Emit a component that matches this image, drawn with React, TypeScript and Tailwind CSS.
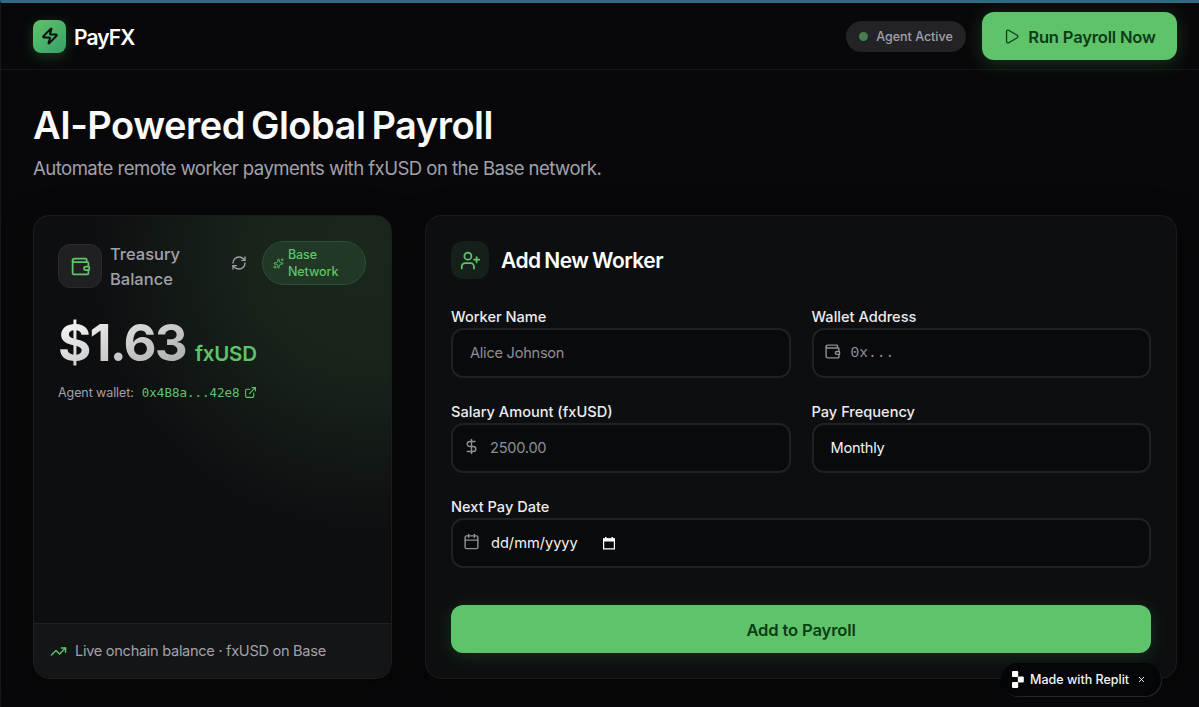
import type { ReactNode } from "react"
import { Calendar, DollarSign, ExternalLink, Play, RefreshCw, Sparkles, TrendingUp, UserPlus, Wallet, X, Zap } from "lucide-react"

function Header() {
  return (
    <header className="flex h-[67px] items-center justify-between border-b border-[#151617] pl-8 pr-[22px]">
      <div className="flex items-center gap-2">
        <div className="flex h-[33px] w-[33px] items-center justify-center rounded-lg bg-linear-to-br from-[#5fc36a] to-[#36a068] shadow-[0_4px_14px_rgba(70,190,90,0.25)]">
          <Zap className="h-[18px] w-[18px] text-[#08130b]" strokeWidth={2.7} />
        </div>
        <span className="pt-[3px] text-[21px] font-semibold tracking-[-0.9px] text-white">PayFX</span>
      </div>
      <div className="flex items-center gap-4">
        <div className="flex h-[31px] w-[120px] items-center justify-center gap-2 rounded-full bg-[#232327]">
          <span className="h-[9px] w-[9px] rounded-full bg-[#467e50]" />
          <span className="pt-[2px] text-[12.5px] font-medium text-[#a1a1aa]">Agent Active</span>
        </div>
        <button className="flex h-12 w-[195px] items-center justify-center gap-2 rounded-xl bg-[#5fc36a] text-[16.6px] font-semibold tracking-[-0.2px] text-[#0b3d16] shadow-[0_3px_18px_rgba(70,190,90,0.25)]">
          <Play className="h-[17px] w-[17px]" strokeWidth={1.8} />
          <span className="pt-[2px]">Run Payroll Now</span>
        </button>
      </div>
    </header>
  )
}

function TreasuryCard() {
  return (
    <section className="flex w-[359px] shrink-0 flex-col overflow-hidden rounded-2xl border border-[#1c1e1f] bg-[#0d0e10] bg-[radial-gradient(circle_at_94%_8%,#1a271d_0%,#18231a_22%,transparent_52%)] shadow-[0_8px_30px_rgba(0,0,0,0.5)]">
      <div className="flex-1 px-6 pt-[25px]">
        <div className="flex items-start">
          <div className="mt-[3px] flex h-11 w-11 items-center justify-center rounded-xl border border-[#2b2b2e] bg-[#202023]">
            <Wallet className="h-[21px] w-[21px] text-[#5fc36a]" strokeWidth={2} />
          </div>
          <h3 className="ml-2 mt-px w-[100px] text-[16.5px] font-medium leading-[25px] text-[#a1a1aa]">Treasury Balance</h3>
          <RefreshCw className="ml-[21px] mt-[14px] h-4 w-4 text-[#a1a1aa]" />
          <div className="ml-[15px] flex h-11 w-[104px] items-center gap-1 rounded-full border border-[#2c5133] bg-[#203825] pl-[10px] text-[12.5px] font-medium leading-[16.5px] text-[#5fc36a]">
            <Sparkles className="h-[11px] w-[11px] shrink-0" />
            <span className="w-[60px] pt-px tracking-[-0.1px]">Base Network</span>
          </div>
        </div>
        <div className="mt-5 flex h-[62px] items-baseline gap-[9px]">
          <span className="bg-linear-to-br from-white to-[#a4a4a4] bg-clip-text text-[51px] font-bold leading-[62px] tracking-[-1.8px] text-transparent">$1.63</span>
          <span className="text-[20.5px] font-semibold tracking-[-0.2px] text-[#5fc36a]">fxUSD</span>
        </div>
        <div className="mt-[10px] flex items-center text-[12.5px] leading-[17px] text-[#a1a1aa]">
          <span className="tracking-[-0.08px]">Agent wallet:</span>
          <a className="ml-2 flex items-center gap-1 font-['DejaVu_Sans_Mono',monospace] text-[12.5px] text-[#5fc36a]">
            0x4B8a...42e8
            <ExternalLink className="h-[13px] w-[13px]" />
          </a>
        </div>
      </div>
      <div className="flex h-[55px] items-center gap-2 border-t border-[#202224] bg-[#141517] px-4 text-[14.6px] tracking-[-0.3px] text-[#a1a1aa]">
        <TrendingUp className="h-[17px] w-[17px] text-[#5fc36a]" />
        <span className="pt-[2px]">Live onchain balance · fxUSD on Base</span>
      </div>
    </section>
  )
}

function Field({ label, className = "", children }: { label: string; className?: string; children: ReactNode }) {
  return (
    <div className={className}>
      <div className="pt-px text-[14.6px] font-medium leading-[22px] text-[#ececee]">{label}</div>
      <div className="flex h-[50px] items-center rounded-xl border-2 border-[#202124] bg-[#090a0c] text-[14.6px] tracking-[-0.25px] text-[#8f8f97]">
        {children}
      </div>
    </div>
  )
}

function AddWorkerCard() {
  return (
    <section className="h-[464px] min-w-0 flex-1 rounded-2xl border border-[#1a1b1d] bg-[#0d0e10] px-[25px] pt-[25px] shadow-[0_8px_30px_rgba(0,0,0,0.5)]">
      <div className="flex items-center gap-3">
        <div className="flex h-[38px] w-[38px] items-center justify-center rounded-xl bg-[#15201a]">
          <UserPlus className="h-[21px] w-[21px] text-[#5fc36a]" />
        </div>
        <h2 className="pt-[2px] text-[21px] font-semibold tracking-[-0.5px] text-white [word-spacing:-1.2px]">Add New Worker</h2>
      </div>
      <div className="mt-[26px] grid grid-cols-2 gap-x-[21px] gap-y-[22px]">
        <Field label="Worker Name">
          <span className="pl-[17px] pt-px">Alice Johnson</span>
        </Field>
        <Field label="Wallet Address">
          <Wallet className="-mt-1 ml-[10px] h-[17px] w-[17px]" />
          <span className="ml-[10px] pt-px font-['Liberation_Mono',monospace] tracking-normal">0x...</span>
        </Field>
        <Field label="Salary Amount (fxUSD)">
          <DollarSign className="-mt-1 ml-[10px] h-[17px] w-[17px]" />
          <span className="ml-[10px] pt-[2px]">2500.00</span>
        </Field>
        <Field label="Pay Frequency">
          <span className="pl-[17px] pt-[2px] text-[#f4f4f5]">Monthly</span>
        </Field>
        <Field label="Next Pay Date" className="col-span-2">
          <Calendar className="-mt-1 ml-[10px] h-[17px] w-[17px]" />
          <span className="ml-[11px] pt-[2px] tracking-normal text-[#f4f4f5]">dd/mm/yyyy</span>
          <svg className="ml-[25px] h-[13px] w-3" viewBox="0 0 12 13" fill="none">
            <path d="M.6 1.8h10.8v10.1H.6z" stroke="#fff" strokeWidth="1.2" />
            <path d="M.5 1.5h11v3H.5zM2 0h1.5v2H2zM8.5 0H10v2H8.5z" fill="#fff" />
          </svg>
        </Field>
      </div>
      <button className="mt-[37px] flex h-12 w-full items-center justify-center rounded-xl bg-[#5fc36a] pt-[2px] text-[16.6px] font-semibold tracking-[-0.15px] text-[#0b3d16] shadow-[0_3px_18px_rgba(70,190,90,0.2)]">
        Add to Payroll
      </button>
    </section>
  )
}

function ReplitBadge() {
  return (
    <div className="absolute bottom-[11px] right-[38px] flex h-[33px] w-[160px] items-center rounded-full bg-[#040506] pl-[11px] text-[12.5px] font-medium text-[#f4f4f5] shadow-[1px_1px_0_#222326]">
      <svg className="h-[17px] w-3" viewBox="0 0 12 17" fill="#fff">
        <rect width="6.2" height="6" rx="1" />
        <rect x="5.8" y="5.6" width="6" height="5.8" rx="1" />
        <rect y="11" width="6.2" height="6" rx="1" />
      </svg>
      <span className="ml-[6px] pt-px">Made with Replit</span>
      <X className="ml-[8px] h-[9px] w-[9px]" strokeWidth={2.5} />
    </div>
  )
}

export default function App() {
  return (
    <div className="relative h-[707px] overflow-hidden border-l border-t-[3px] border-l-[#161719] border-t-[#316b82] bg-[#08080a] font-['Inter',sans-serif]">
      <Header />
      <main className="pl-8 pr-[22px] pt-8">
        <h1 className="text-[38px] font-semibold leading-[46px] tracking-[-0.5px] text-[#fafafa] [word-spacing:-3px]">AI-Powered Global Payroll</h1>
        <p className="mt-[6px] text-[18.6px] leading-[28px] tracking-[-0.56px] text-[#a1a1aa]">
          Automate remote worker payments with fxUSD on the Base network.
        </p>
        <div className="mt-[33px] flex gap-[33px]">
          <TreasuryCard />
          <AddWorkerCard />
        </div>
      </main>
      <ReplitBadge />
    </div>
  )
}
